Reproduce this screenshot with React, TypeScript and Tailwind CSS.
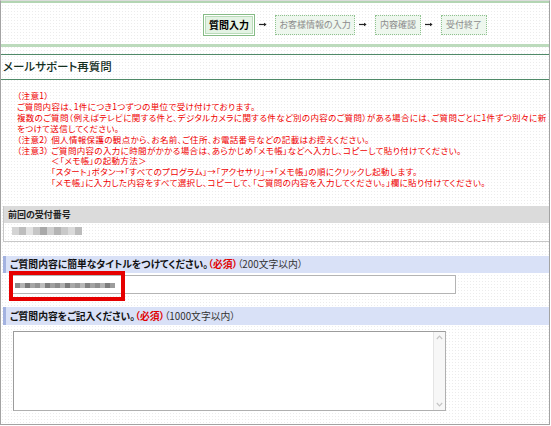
import React from 'react';

const notes = [
  { indent: false, text: '（注意1）' },
  { indent: false, text: 'ご質問内容は、1件につき1つずつの単位で受け付けております。' },
  {
    indent: false,
    text: '複数のご質問（例えばテレビに関する件と、デジタルカメラに関する件など別の内容のご質問）がある場合には、ご質問ごとに1件ずつ別々に新',
  },
  { indent: false, text: 'をつけて送信してください。' },
  { indent: false, text: '（注意2） 個人情報保護の観点から、お名前、ご住所、お電話番号などの記載はお控えください。' },
  {
    indent: false,
    text: '（注意3） ご質問内容の入力に時間がかかる場合は、あらかじめ「メモ帳」などへ入力し、コピーして貼り付けてください。',
  },
  { indent: true, text: '＜「メモ帳」の起動方法＞' },
  { indent: true, text: '「スタート」ボタン→「すべてのプログラム」→「アクセサリ」→「メモ帳」の順にクリックし起動します。' },
  {
    indent: true,
    text: '「メモ帳」に入力した内容をすべて選択し、コピーして、「ご質問の内容を入力してください。」欄に貼り付けてください。',
  },
];

// mosaic cells standing in for the blurred numbers
const receiptCells = ['#d4d4d4', '#bdbdbd', '#e2e2e2', '#c6c6c6', '#a9a9a9', '#cfcfcf', '#b4b4b4', '#c9c9c9', '#dadada', '#bcbcbc'];
const titleCells = [
  '#8a8a8a', '#b4b4b4', '#7a7a7a', '#a6a6a6', '#939393', '#bdbdbd', '#7f7f7f', '#a0a0a0', '#8c8c8c', '#b0b0b0',
  '#7c7c7c', '#a8a8a8', '#969696', '#b8b8b8', '#838383', '#a3a3a3', '#8f8f8f', '#b2b2b2', '#7e7e7e', '#9c9c9c',
];

const Arrow = () => (
  <div className="w-[20px] flex items-center pl-[4px]">
    <svg width="8" height="5" viewBox="0 0 8 5">
      <path d="M0 2.5H6.5" stroke="#222" strokeWidth="1.2" />
      <path d="M5 0.8L7.6 2.5L5 4.2Z" fill="#222" />
    </svg>
  </div>
);

const Step = ({ label, width }: { label: string; width: string }) => (
  <div
    className={`${width} h-[20px] flex items-center justify-center border border-dotted border-[#8fc28f] bg-[#eef7ee] text-[9px] text-[#8c8c8c] whitespace-nowrap`}
  >
    {label}
  </div>
);

export default function App() {
  return (
    <div className="w-[551px] h-[426px] bg-white overflow-hidden font-['Noto_Sans_CJK_JP',sans-serif] [font-feature-settings:'palt']">
      <div className="relative w-[550px] h-[425px] border border-[#a3a3a3] border-t-[#dcdcdc] overflow-hidden bg-white bg-[radial-gradient(circle,#ececec_0.5px,transparent_0.7px)] bg-[length:3px_3px]">
        {/* top band */}
        <div className="h-[2px] bg-[#b3d5b3]" />

        {/* steps */}
        <div className="h-[41px] flex items-center pl-[202px] pt-[2px]">
          <div className="border border-[#86bb86] p-px bg-white">
            <div className="w-[48px] h-[18px] flex items-center justify-center bg-[#e4f3e4] border border-[#b9dcb9] text-[10px] font-bold text-black whitespace-nowrap">
              質問入力
            </div>
          </div>
          <Arrow />
          <Step label="お客様情報の入力" width="w-[80px]" />
          <Arrow />
          <Step label="内容確認" width="w-[46px]" />
          <Arrow />
          <Step label="受付終了" width="w-[46px]" />
        </div>
        <div className="h-[3px] bg-[#bcdbbc]" />

        {/* page title */}
        <div className="mt-[7px] h-[26px] border-y border-[#4f8a68] flex items-center pl-[2px]">
          <h1 className="text-[11.5px] font-medium leading-none text-[#15301f] whitespace-nowrap">メールサポート再質問</h1>
        </div>

        {/* notes */}
        <div className="mt-[10px] text-[8.5px] tracking-[0.35px] leading-[10.9px] text-[#f00000] whitespace-nowrap">
          {notes.map((n) => (
            <div key={n.text} className={n.indent ? 'pl-[50px]' : 'pl-[16px]'}>
              {n.text}
            </div>
          ))}
        </div>

        {/* previous receipt number */}
        <div className="mt-[18px] ml-[2px] border-l border-b border-[#c8c8c8]">
          <div className="h-[17px] bg-[#dbdbdb] flex items-center pl-[4px] text-[9px] font-bold text-[#222]">
            前回の受付番号
          </div>
          <div className="h-[18px] pl-[8px] pt-[4px]">
            <div className="flex h-[8px]">
              {receiptCells.map((c, i) => (
                <span key={i} className="w-[7px] h-[8px]" style={{ backgroundColor: c }} />
              ))}
            </div>
          </div>
        </div>

        {/* title field */}
        <div className="mt-[14px] ml-[2px] h-[17px] bg-[#d9e1f7] border-l-[3px] border-[#a3b2e0] flex items-center pl-[4px] text-[9.8px] whitespace-nowrap">
          <span className="font-bold text-[#111]">ご質問内容に簡単なタイトルをつけてください。</span>
          <span className="font-bold text-[#e00000]">（必須）</span>
          <span className="text-[#333]">（200文字以内）</span>
        </div>
        <div className="mt-[2px] ml-[11px] w-[444px] h-[19px] border border-[#b4b4b4] bg-white flex items-center pl-[2px]">
          <div className="flex h-[5px] mt-[1px]">
            {titleCells.map((c, i) => (
              <span key={i} className="w-[5px] h-[5px]" style={{ backgroundColor: c }} />
            ))}
          </div>
        </div>

        {/* body field */}
        <div className="mt-[13px] ml-[2px] h-[18px] bg-[#d9e1f7] border-l-[3px] border-[#a3b2e0] flex items-center pl-[4px] text-[9.8px] whitespace-nowrap">
          <span className="font-bold text-[#111]">ご質問内容をご記入ください。</span>
          <span className="font-bold text-[#e00000]">（必須）</span>
          <span className="text-[#333]">（1000文字以内）</span>
        </div>
        <div className="mt-[6px] ml-[12px] w-[433px] h-[80px] border border-[#b0b0b0] border-t-[#9c9c9c] border-l-[#9c9c9c] bg-white flex">
          <div className="flex-1" />
          <div className="w-[12px] bg-[#f7f7f7] border-l border-[#e4e4e4] flex flex-col justify-between items-center py-[3px]">
            <svg width="7" height="5" viewBox="0 0 7 5">
              <path d="M0.8 4L3.5 1.2L6.2 4" fill="none" stroke="#c4c4c4" strokeWidth="1.2" />
            </svg>
            <svg width="7" height="5" viewBox="0 0 7 5">
              <path d="M0.8 1L3.5 3.8L6.2 1" fill="none" stroke="#c4c4c4" strokeWidth="1.2" />
            </svg>
          </div>
        </div>

        {/* red highlight over the title field */}
        <div className="absolute left-[8px] top-[270px] w-[116px] h-[30px] border-4 border-[#e60000]" />
      </div>
    </div>
  );
}
